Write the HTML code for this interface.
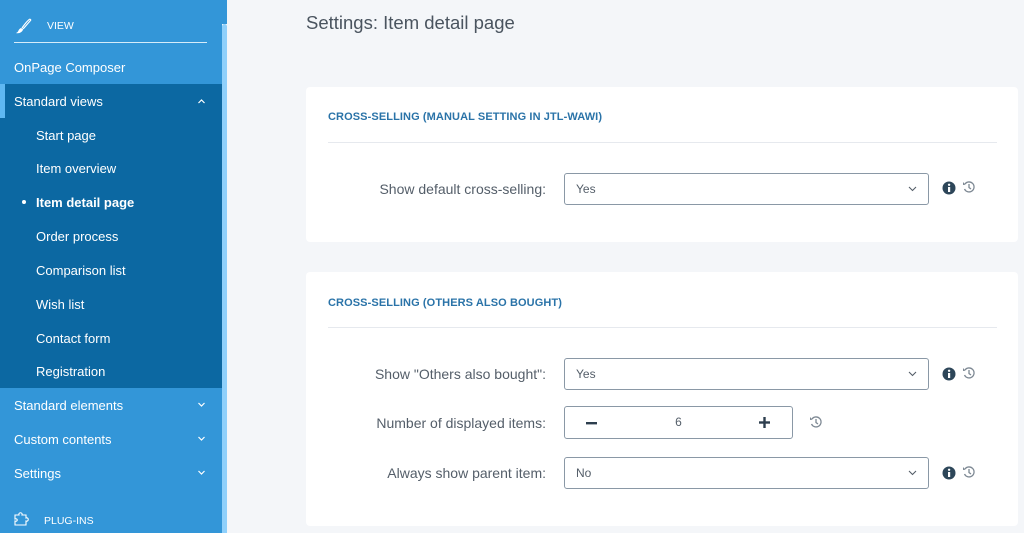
<!DOCTYPE html>
<html><head><meta charset="utf-8"><style>
*{box-sizing:border-box;margin:0;padding:0}
body{width:1024px;height:533px;overflow:hidden;background:#f4f6f9;font-family:"Liberation Sans",sans-serif;position:relative}
.sb{position:absolute;left:0;top:0;width:222px;height:533px;background:#3396d8;color:#fff;font-size:13px}
.sc{position:absolute;left:222px;top:24px;width:5px;height:509px;background:#8fd0fb;border-radius:3px 3px 0 0}
.sct{position:absolute;left:222px;top:0;width:5px;height:24px;background:#3396d8}
.it{position:absolute;left:14px;height:20px;line-height:20px}
.sub{position:absolute;left:36px;line-height:20px}
.dark{position:absolute;left:0;top:84px;width:222px;height:304px;background:#0c68a2}
.mark{position:absolute;left:0;top:84px;width:5px;height:34px;background:#5fb8f2}
.chev{position:absolute;left:197px;width:9px;height:9px}
.card{position:absolute;left:306px;width:712px;background:#fff;border-radius:4px}
h1{position:absolute;left:306px;top:12px;font-size:18.5px;font-weight:normal;color:#4a545f}
.ct{position:absolute;left:22px;font-size:11px;font-weight:bold;color:#2a73a8;letter-spacing:.1px}
.hr{position:absolute;left:22px;width:669px;height:1px;background:#e6e9ee}
.lab{position:absolute;right:472px;font-size:14px;color:#545e69;text-align:right;white-space:nowrap}
.sel{position:absolute;left:258px;width:365px;height:32px;border:1px solid #8a98a6;border-radius:3px;font-size:12px;color:#545e69;padding-left:11px;line-height:30px}
.sel svg{position:absolute;right:11px;top:12px}
.num{position:absolute;left:258px;width:229px;height:33px;border:1px solid #8a98a6;border-radius:3px;font-size:12px;color:#545e69;text-align:center;line-height:31px}
.ic{position:absolute}
</style></head><body>
<div class="sb">
 <div class="dark"></div><div class="mark"></div>
 <svg style="position:absolute;left:15px;top:17px" width="18" height="18" viewBox="0 0 18 18"><path d="M15 2 C13 3 9 8 7 11 M16 3 C14 5 10 10 8 12 M15 2 L16 3" stroke="#fff" stroke-width="1.2" fill="none"/><path d="M6 11 C3 12 4 15 1 16 C4 17 8 15 8 12 Z" fill="#fff"/></svg>
 <div style="position:absolute;left:47px;top:20px;font-size:10.5px">VIEW</div>
 <div style="position:absolute;left:14px;top:42px;width:193px;height:1px;background:#d6ecfa"></div>
 <div class="it" style="top:58px">OnPage Composer</div>
 <div class="it" style="top:92px">Standard views</div>
 <svg class="chev" style="top:97px" viewBox="0 0 9 9"><path d="M1.5 6 L4.5 3 L7.5 6" stroke="#fff" stroke-width="1.2" fill="none"/></svg>
 <div class="sub" style="top:126px">Start page</div>
 <div class="sub" style="top:159px">Item overview</div>
 <div style="position:absolute;left:22px;top:200px;width:4px;height:4px;border-radius:50%;background:#fff"></div>
 <div class="sub" style="top:193px;font-weight:bold">Item detail page</div>
 <div class="sub" style="top:227px">Order process</div>
 <div class="sub" style="top:261px">Comparison list</div>
 <div class="sub" style="top:295px">Wish list</div>
 <div class="sub" style="top:329px">Contact form</div>
 <div class="sub" style="top:362px">Registration</div>
 <div class="it" style="top:396px">Standard elements</div>
 <svg class="chev" style="top:400px" viewBox="0 0 9 9"><path d="M1.5 3 L4.5 6 L7.5 3" stroke="#fff" stroke-width="1.2" fill="none"/></svg>
 <div class="it" style="top:430px">Custom contents</div>
 <svg class="chev" style="top:434px" viewBox="0 0 9 9"><path d="M1.5 3 L4.5 6 L7.5 3" stroke="#fff" stroke-width="1.2" fill="none"/></svg>
 <div class="it" style="top:464px">Settings</div>
 <svg class="chev" style="top:468px" viewBox="0 0 9 9"><path d="M1.5 3 L4.5 6 L7.5 3" stroke="#fff" stroke-width="1.2" fill="none"/></svg>
 <svg style="position:absolute;left:14px;top:511px" width="18" height="16" viewBox="0 0 18 16"><path d="M1 4 H5 C4 1 9 1 8 4 H12 V7 C15 6 15 11 12 10 V14 H1 V10 C4 11 4 7 1 8 Z" stroke="#fff" stroke-width="1.1" fill="none"/></svg>
 <div style="position:absolute;left:44px;top:515px;font-size:10.5px">PLUG-INS</div>
</div>
<div class="sct"></div><div class="sc"></div>
<h1>Settings: Item detail page</h1>
<div class="card" style="top:87px;height:155px">
 <div class="ct" style="top:24px">CROSS-SELLING (MANUAL SETTING IN JTL-WAWI)</div>
 <div class="hr" style="top:55px"></div>
 <div class="lab" style="top:94px">Show default cross-selling:</div>
 <div class="sel" style="top:86px">Yes<svg width="9" height="6" viewBox="0 0 9 6"><path d="M1 1 L4.5 4.5 L8 1" stroke="#545e69" stroke-width="1.1" fill="none"/></svg></div>
</div>
<div class="card" style="top:272px;height:254px">
 <div class="ct" style="top:25px">CROSS-SELLING (OTHERS ALSO BOUGHT)</div>
 <div class="hr" style="top:55px"></div>
 <div class="lab" style="top:94px">Show "Others also bought":</div>
 <div class="sel" style="top:86px">Yes<svg width="9" height="6" viewBox="0 0 9 6"><path d="M1 1 L4.5 4.5 L8 1" stroke="#545e69" stroke-width="1.1" fill="none"/></svg></div>
 <div class="lab" style="top:143px">Number of displayed items:</div>
 <div class="num" style="top:134px">6
  <svg style="position:absolute;left:21px;top:15px" width="11" height="3"><rect width="11" height="2.4" fill="#2d3e4e"/></svg>
  <svg style="position:absolute;left:194px;top:10px" width="11" height="11"><rect y="4.3" width="11" height="2.4" fill="#2d3e4e"/><rect x="4.3" width="2.4" height="11" fill="#2d3e4e"/></svg>
 </div>
 <div class="lab" style="top:193px">Always show parent item:</div>
 <div class="sel" style="top:185px">No<svg width="9" height="6" viewBox="0 0 9 6"><path d="M1 1 L4.5 4.5 L8 1" stroke="#545e69" stroke-width="1.1" fill="none"/></svg></div>
</div>
<svg class="ic" style="left:942px;top:181px" width="14" height="14"><circle cx="7" cy="7" r="6.5" fill="#2d4659"/><rect x="6" y="6" width="2.2" height="5" fill="#fff"/><circle cx="7.1" cy="3.8" r="1.2" fill="#fff"/></svg>
<svg class="ic" style="left:942px;top:367px" width="14" height="14"><circle cx="7" cy="7" r="6.5" fill="#2d4659"/><rect x="6" y="6" width="2.2" height="5" fill="#fff"/><circle cx="7.1" cy="3.8" r="1.2" fill="#fff"/></svg>
<svg class="ic" style="left:942px;top:466px" width="14" height="14"><circle cx="7" cy="7" r="6.5" fill="#2d4659"/><rect x="6" y="6" width="2.2" height="5" fill="#fff"/><circle cx="7.1" cy="3.8" r="1.2" fill="#fff"/></svg>
<svg class="ic" style="left:962px;top:180px" width="14" height="14" viewBox="0 0 14 14"><path d="M3 4 A5 5 0 1 1 2.5 9" stroke="#7d8893" stroke-width="1.3" fill="none"/><path d="M1 2 L3.5 4.8 L1 5 Z" fill="#7d8893"/><path d="M7 4 V7.5 L9 9" stroke="#7d8893" stroke-width="1.3" fill="none"/></svg>
<svg class="ic" style="left:962px;top:366px" width="14" height="14" viewBox="0 0 14 14"><path d="M3 4 A5 5 0 1 1 2.5 9" stroke="#7d8893" stroke-width="1.3" fill="none"/><path d="M1 2 L3.5 4.8 L1 5 Z" fill="#7d8893"/><path d="M7 4 V7.5 L9 9" stroke="#7d8893" stroke-width="1.3" fill="none"/></svg>
<svg class="ic" style="left:809px;top:415px" width="14" height="14" viewBox="0 0 14 14"><path d="M3 4 A5 5 0 1 1 2.5 9" stroke="#7d8893" stroke-width="1.3" fill="none"/><path d="M1 2 L3.5 4.8 L1 5 Z" fill="#7d8893"/><path d="M7 4 V7.5 L9 9" stroke="#7d8893" stroke-width="1.3" fill="none"/></svg>
<svg class="ic" style="left:962px;top:465px" width="14" height="14" viewBox="0 0 14 14"><path d="M3 4 A5 5 0 1 1 2.5 9" stroke="#7d8893" stroke-width="1.3" fill="none"/><path d="M1 2 L3.5 4.8 L1 5 Z" fill="#7d8893"/><path d="M7 4 V7.5 L9 9" stroke="#7d8893" stroke-width="1.3" fill="none"/></svg>
</body></html>
